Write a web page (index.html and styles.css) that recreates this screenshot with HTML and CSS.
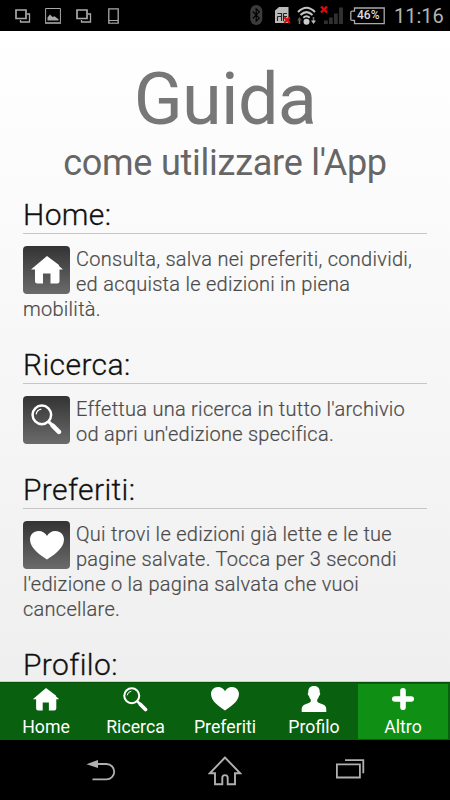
FILE: index.html
```html
<!DOCTYPE html>
<html lang="it">
<head>
<meta charset="utf-8">
<title>Guida</title>
<link rel="stylesheet" href="styles.css">
</head>
<body>
<svg class="defs" width="0" height="0" aria-hidden="true">
  <symbol id="house" viewBox="0 0 34 30"><path fill="currentColor" d="M17 1 1 14.600h4V26q0 2.500 2.500 2.500H13V18.500h7.500v10H27q2.500 0 2.500-2.500V14.600h3.500L29 11.100V10z"/></symbol>
  <symbol id="search" viewBox="0 0 30 30"><circle cx="10.500" cy="10.500" r="9" fill="none" stroke="currentColor" stroke-width="2.400"/><path d="M5 10a6 6 0 0 1 5-5" fill="none" stroke="currentColor" stroke-width="1.200"/><path d="m17 17 4 4" stroke="currentColor" stroke-width="3"/><path d="m21 21 6 6" stroke="currentColor" stroke-width="4.400" stroke-linecap="round"/></symbol>
  <symbol id="heart" viewBox="0 0 34 29"><path fill="currentColor" d="M17 28.500C12 25 0 18 0 8.500 0 4 3.500 0 8.500 0 12.500 0 15.500 2 17 5c1.500-3 4.500-5 8.500-5C30.500 0 34 4 34 8.500 34 18 22 25 17 28.500z"/></symbol>
  <symbol id="person" viewBox="0 0 26 26"><path fill="currentColor" d="M13 0c4 0 6 2.500 5.700 6.500 1 .8.500 3-.7 3.500-.3 1.500-.9 2.500-1.800 3.500v2c1.300 1.900 5 2 7.300 3.700C25.500 20.700 25.300 23 25.300 26H.7c0-3-.2-5.300 1.800-6.800C4.800 17.500 8.500 17.400 9.800 15.500v-2C8.900 12.500 8.300 11.500 8 10c-1.200-.5-1.700-2.700-.7-3.500C7 2.500 9 0 13 0z"/></symbol>
  <symbol id="plus" viewBox="0 0 22 22"><path d="M11 2.800v16.400M2.800 11h16.400" stroke="currentColor" stroke-width="5.600" stroke-linecap="round"/></symbol>
  <symbol id="windows" viewBox="0 0 16 14"><path d="M11.500 5h3v8h-9v-2" fill="none" stroke="#aaa" stroke-width="1.300"/><path d="M1 1h10v8.500H1z" fill="#000" stroke="#aaa" stroke-width="1.700"/></symbol>
</svg>

<header class="status">
  <svg class="win" width="16" height="14"><use href="#windows"/></svg>
  <svg class="pic" width="16" height="16" viewBox="0 0 16 16"><path d="M.6.500h14.800v15H.6z" fill="none" stroke="#aaa"/><path d="M0 14h16v2H0z" fill="#888"/><path d="M2.500 12.500V9.500l2.500-3 2.500 2.500 2-.8 4 3v1.300z" fill="#aaa"/></svg>
  <svg class="win" width="16" height="14"><use href="#windows"/></svg>
  <svg class="phone" width="11" height="16" viewBox="0 0 11 16"><path d="M.8.800h9.400v14.400H.8z" fill="none" stroke="#aaa" stroke-width="1.300"/><path d="M1 12.500h9" stroke="#aaa"/><path d="M2.500 14h1.500m1 0h1m1 0h1.500" stroke="#000"/></svg>
  <span class="spacer"></span>
  <svg class="bt" width="13" height="20" viewBox="0 0 13 20"><rect width="12" height="20" x=".3" rx="6" fill="#3c3c3c"/><path d="m2.800 6.500 6.500 6.700-3.100 3V3.800l3.100 3-6.500 6.700" fill="none" stroke="#000" stroke-width="1.200"/></svg>
  <svg class="sim" width="16" height="18" viewBox="0 0 16 18"><path d="M0 4.500 4 1h9.500v16H0z" fill="#bbb"/><path d="M2.500 7.500h4v3h-4m0 0V15m4-4.500V15M8.500 7.500H12m-3.500 3H12M8.500 7.500V15" fill="none" stroke="#222" stroke-width="1.100"/><path d="m9.300 11.300 5.400 5.400m0-5.400-5.400 5.400" stroke="#e00b0b" stroke-width="2.300"/></svg>
  <svg class="wifi" width="19" height="19" viewBox="0 0 19 19"><path d="M1 6q8.500-8.500 17 0M3.500 9q6-5.800 12 0M6.300 11.800q3.200-3 6.400 0" fill="none" stroke="#c4c4c4" stroke-width="2"/><circle cx="9.500" cy="15.800" r="3" fill="#ccc"/><path d="M2.500 18v-5m14-2v5" stroke="#777" stroke-width="1.500"/><path d="M0 14.500 2.500 11 5 14.500z" fill="#555"/><path d="m14 14.500 2.500 3.500 2.500-3.500z" fill="#bbb"/></svg>
  <svg class="signal" width="24" height="20" viewBox="0 0 24 20"><path d="M4 15.500h3.800V19H4zm5-3h3.800V19H9zm5-4h3.800V19H14zm5-6h4V19h-4z" fill="#303030"/><path d="m1 1.500 6 6m0-6-6 6" stroke="#e00b0b" stroke-width="2.400"/></svg>
  <span class="battery"><svg width="35" height="18" viewBox="0 0 35 18"><path d="M4.500 1h29.700v15.600H4.500v-3.200H2q-1.200 0-1.200-1.200V5.400Q.8 4.200 2 4.200h2.500z" fill="none" stroke="#aaa" stroke-width="1.300"/></svg><b>46%</b></span>
  <time>11:16</time>
</header>

<main>
  <h1>Guida</h1>
  <p class="subtitle">come utilizzare l'App</p>
  <section>
    <h2>Home:</h2>
    <span class="tile"><svg width="34" height="30"><use href="#house"/></svg></span>
    <p>Consulta, salva nei preferiti, condividi,<br>ed acquista le edizioni in piena<br>mobilità.</p>
  </section>
  <section>
    <h2>Ricerca:</h2>
    <span class="tile lens"><svg width="31" height="31"><use href="#search"/></svg></span>
    <p>Effettua una ricerca in tutto l'archivio<br>od apri un'edizione specifica.</p>
  </section>
  <section>
    <h2>Preferiti:</h2>
    <span class="tile"><svg width="34" height="29"><use href="#heart"/></svg></span>
    <p>Qui trovi le edizioni già lette e le tue<br>pagine salvate. Tocca per 3 secondi<br>l'edizione o la pagina salvata che vuoi<br>cancellare.</p>
  </section>
  <section>
    <h2>Profilo:</h2>
  </section>
</main>

<nav class="tabs">
  <a><span class="glyph"><svg width="28" height="25"><use href="#house"/></svg></span>Home</a>
  <a><span class="glyph"><svg width="25" height="25"><use href="#search"/></svg></span>Ricerca</a>
  <a><span class="glyph"><svg width="28" height="24"><use href="#heart"/></svg></span>Preferiti</a>
  <a><span class="glyph"><svg width="26" height="26"><use href="#person"/></svg></span>Profilo</a>
  <a class="active"><span class="glyph"><svg width="22" height="22"><use href="#plus"/></svg></span>Altro</a>
</nav>

<footer class="system">
  <svg class="back" width="32" height="24" viewBox="0 0 32 24"><path d="M10 4h10.500a7.700 7.700 0 0 1 0 15.400H6.500" fill="none" stroke="#b0b0b0" stroke-width="1.800"/><path d="M.5 4.200 12 0v8z" fill="#b0b0b0"/></svg>
  <svg class="homekey" width="34" height="30" viewBox="0 0 34 30"><path d="M17 1.500 1.800 17.300H7v11h7.300v-6.500a2.700 2.700 0 0 1 5.400 0v6.500H27v-11h5.200z" fill="none" stroke="#b0b0b0" stroke-width="1.900"/></svg>
  <svg class="recent" width="30" height="22" viewBox="0 0 30 22"><path d="M1.900 6.300h23v13.200h-23zM10 2.200h18.300v13" fill="none" stroke="#b0b0b0" stroke-width="1.800"/></svg>
</footer>
</body>
</html>
```
FILE: styles.css
```css
* { box-sizing: border-box; }
body {
  margin: 0;
  width: 450px;
  height: 800px;
  display: flex;
  flex-direction: column;
  overflow: hidden;
  background: #000;
  font-family: Roboto, "Liberation Sans", sans-serif;
}
.defs { position: absolute; }
svg { display: block; flex: none; }
.status {
  height: 31px;
  flex: none;
  display: flex;
  align-items: flex-start;
  padding: 0 7px 0 15px;
  color: #aaa;
}
.win { margin: 9px 14px 0 0; }
.pic { margin: 8px 15px 0 0; }
.phone { margin: 8px 0 0 2px; }
.spacer { flex: 1; }
.bt { margin: 5px 12px 0 0; }
.sim { margin: 6px 6px 0 0; }
.wifi { margin: 6px 4px 0 0; }
.signal { margin: 5px 6px 0 0; }
.battery {
  margin: 7px 9px 0 0;
  display: grid;
}
.battery > * { grid-area: 1 / 1; }
.battery b {
  padding-left: 7px;
  font-size: 12px;
  line-height: 17px;
  font-weight: 500;
  color: #ddd;
}
time {
  width: 49px;
  font-size: 20px;
  line-height: 33px;
  color: #b4b4b4;
  white-space: nowrap;
}
main {
  height: 651px;
  flex: none;
  overflow: hidden;
  padding: 27px 23px 0;
  border-bottom: 1px solid #c9d0c9;
  background: linear-gradient(#fff, #efefef);
}
h1, h2, p { margin: 0; font-weight: 400; white-space: nowrap; }
h1 {
  font-size: 72px;
  line-height: 84px;
  letter-spacing: -0.7px;
  text-align: center;
  color: #777;
}
.subtitle {
  margin-bottom: 13px;
  font-size: 36px;
  line-height: 42px;
  letter-spacing: -0.250px;
  text-align: center;
  color: #666;
}
section { margin-bottom: 25px; }
h2 {
  margin-bottom: 13px;
  border-bottom: 1px solid #c6c6c6;
  font-size: 30px;
  line-height: 36px;
  letter-spacing: 0.400px;
  font-weight: 300;
  -webkit-text-stroke: 0.300px #111;
  color: #111;
}
section p {
  font-size: 20px;
  line-height: 25px;
  letter-spacing: 0.270px;
  font-weight: 300;
  -webkit-text-stroke: 0.200px #4a4a4a;
  color: #4a4a4a;
}
.tile {
  float: left;
  width: 47px;
  height: 48px;
  margin: -1px 6px 0 0;
  display: flex;
  align-items: center;
  justify-content: center;
  border-radius: 4px;
  background: linear-gradient(#333, #6b6b6b);
  color: #fff;
}
.lens { padding-bottom: 2px; }
.tabs {
  height: 58px;
  flex: none;
  display: grid;
  grid-template-columns: 92px 87px 92px 86px 93px;
  background: #09610f;
  border-top: 1px solid #06500a;
  color: #fff;
}
.tabs a {
  display: flex;
  flex-direction: column;
  align-items: center;
  font-size: 17.700px;
  line-height: 22px;
  padding-top: 2px;
}
.tabs .glyph {
  height: 31px;
  display: flex;
  align-items: center;
  padding-bottom: 3px;
}
.tabs .active {
  margin: 1px 2px 1px 1px;
  padding-top: 1px;
  background: #0f9015;
}
.system {
  height: 60px;
  flex: none;
  display: flex;
  align-items: flex-start;
}
.back { margin: 20px 0 0 86px; }
.homekey { margin: 16px 0 0 90px; }
.recent { margin: 18px 0 0 93px; }
```
